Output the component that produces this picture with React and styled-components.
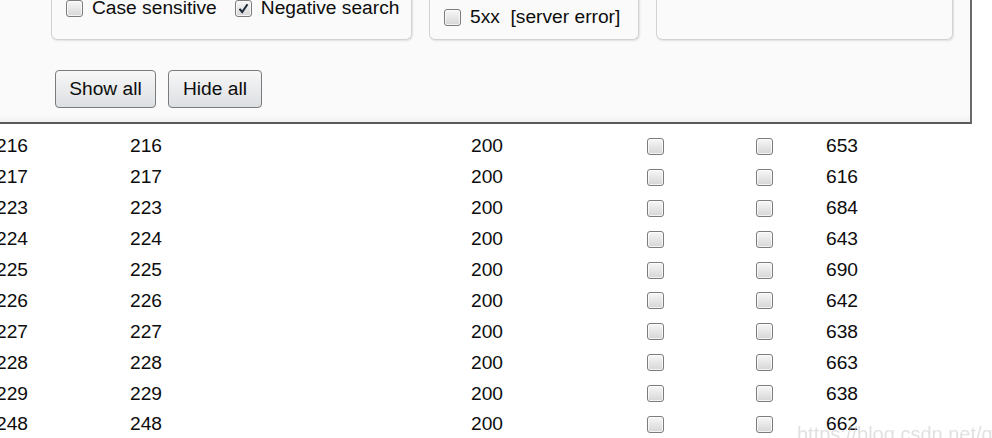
import React from "react";
import styled, { createGlobalStyle } from "styled-components";

const GlobalStyle = createGlobalStyle`
  html, body {
    margin: 0;
    padding: 0;
    background: #ffffff;
    overflow: hidden;
  }
  body {
    font-family: "Liberation Sans", Arial, sans-serif;
    font-size: 19.2px;
    color: #0d0d0d;
  }
`;

const rows = [
  [216, 200, 653],
  [217, 200, 616],
  [223, 200, 684],
  [224, 200, 643],
  [225, 200, 690],
  [226, 200, 642],
  [227, 200, 638],
  [228, 200, 663],
  [229, 200, 638],
  [248, 200, 662],
];

function Checkbox({ checked }) {
  return (
    <Box>
      {checked && (
        <svg width="13" height="13" viewBox="0 0 13 13">
          <path d="M2.5 6.8 L5.2 10 L10.5 2.2" fill="none" stroke="#1b2a3a" strokeWidth="2" />
        </svg>
      )}
    </Box>
  );
}

function App() {
  return (
    <Page>
      <GlobalStyle />
      <Panel>
        <Groups>
          <Group width={361} pad={21}>
            <Option>
              <Checkbox />
              <span>Case sensitive</span>
            </Option>
            <Option>
              <Checkbox checked />
              <span>Negative search</span>
            </Option>
          </Group>
          <Group width={210} pad={12}>
            <Option>
              <Checkbox />
              <span>5xx&nbsp; [server error]</span>
            </Option>
          </Group>
          <Group width={297} pad={12} />
        </Groups>
        <Buttons>
          <Button style={{ width: 101 }}>Show all</Button>
          <Button style={{ width: 94 }}>Hide all</Button>
        </Buttons>
      </Panel>
      <Table>
        {rows.map(([n, status, len]) => (
          <Row key={n}>
            <Cell>{n}</Cell>
            <Cell>{n}</Cell>
            <Cell>{status}</Cell>
            <Cell>
              <Checkbox />
            </Cell>
            <Cell>
              <Checkbox />
            </Cell>
            <Cell>{len}</Cell>
          </Row>
        ))}
      </Table>
      <Watermark>https://blog.csdn.net/qq</Watermark>
    </Page>
  );
}

const Page = styled.div`
  margin: -30px 0 0 -60px;
  width: 1052px;
`;

const Panel = styled.div`
  width: 1032px;
  background: linear-gradient(to bottom, #fafafa 0, #fafafa 145px, #f1f1f1 151px);
  border-right: 2px solid #6a6a6a;
  border-bottom: 2px solid #5a5a5a;
  padding: 0 0 14px 111px;
  box-sizing: border-box;
`;

const Groups = styled.div`
  display: flex;
  gap: 17px;
`;

const Group = styled.div`
  width: ${(p) => p.width}px;
  height: 70px;
  box-sizing: border-box;
  border: 1px solid #d2d2d2;
  border-top: none;
  border-radius: 0 0 6px 6px;
  box-shadow: 1px 1px 2px rgba(0, 0, 0, 0.1);
  display: flex;
  align-items: flex-end;
  gap: 18px;
  padding: 0 0 ${(p) => p.pad}px 14px;
`;

const Option = styled.label`
  display: flex;
  align-items: center;
  gap: 9px;
  line-height: 20px;
  white-space: nowrap;
`;

const Box = styled.span`
  width: 17px;
  height: 17px;
  box-sizing: border-box;
  border: 1px solid #7c7c7c;
  border-radius: 3px;
  background: linear-gradient(to bottom, #f7f7f7, #d6d6d6);
  box-shadow: inset 0 0 0 1px rgba(255, 255, 255, 0.7);
  display: inline-flex;
  align-items: center;
  justify-content: center;
  flex-shrink: 0;
`;

const Buttons = styled.div`
  display: flex;
  gap: 12px;
  margin: 30px 0 0 4px;
`;

const Button = styled.button`
  height: 38px;
  box-sizing: border-box;
  border: 1px solid #7b7b7b;
  border-radius: 4px;
  background: linear-gradient(to bottom, #f7f7f7, #dcdfe2);
  font-family: "Liberation Sans", Arial, sans-serif;
  font-size: 19.2px;
  color: #0d0d0d;
  padding: 0;
`;

const Table = styled.div`
  padding: 7px 0 0 56px;
`;

const Row = styled.div`
  display: grid;
  grid-template-columns: 134px 341px 176px 109px 70px 1fr;
  height: 30.9px;
  align-items: center;
`;

const Cell = styled.div`
  display: flex;
  align-items: center;
  line-height: 20px;
`;

const Watermark = styled.div`
  position: fixed;
  left: 797px;
  top: 423px;
  font-size: 20px;
  color: rgba(200, 200, 200, 0.55);
  white-space: nowrap;
`;

export default App;
